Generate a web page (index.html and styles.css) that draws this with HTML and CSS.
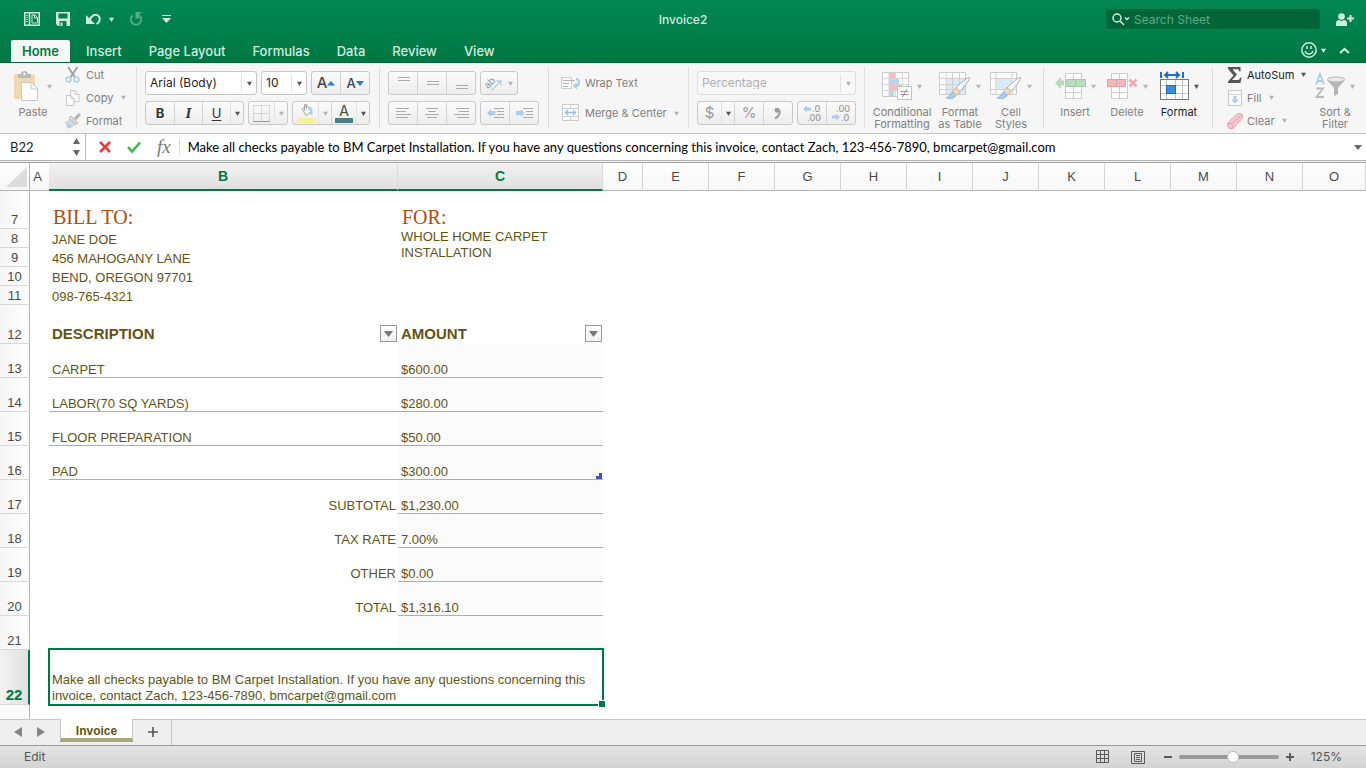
FILE: index.html
```html
<!DOCTYPE html>
<html lang="en">
<head>
<meta charset="utf-8">
<title>Invoice2</title>
<meta name="viewport" content="width=device-width, initial-scale=1">
<link rel="stylesheet" href="styles.css">
</head>
<body>
<svg class="defs" aria-hidden="true">
  <symbol id="caret" viewBox="0 0 6 6"><path d="M0 1h6L3 6z" fill="currentColor"/></symbol>
  <symbol id="brush" viewBox="0 0 26 24">
    <path d="M24.500 1.500c1 1-6 10.500-9.500 14l-4-3.500C14.500 8 23 .5 24.500 1.500z" fill="#fafafa" stroke="#a5a5a5"/>
    <path d="M15 15.500l-4-3.500c-2 .5-3 2-3 4l3 3c2 0 3.500-1.500 4-3.500z" fill="#f0d9b5" stroke="#d3bd9a"/>
    <path d="M8 16c-3 1-3 4.500-7 6 4 1.500 9 .5 10-3z" fill="#a9cdf0" stroke="#93bce4"/>
  </symbol>
</svg>

<header class="top">
  <div class="titlebar">
    <div class="quick">
      <button class="plain" aria-label="Workbook gallery"><svg width="16" height="14" viewBox="0 0 16 14"><rect x=".75" y=".75" width="14.500" height="12.500" fill="none" stroke="currentColor" stroke-width="1.500"/><path d="M5.500 1v12" stroke="currentColor" stroke-width="1.500"/><path d="M3 3v8" stroke="currentColor" stroke-width="1.500" stroke-dasharray="1 1"/><path d="M8 3h3l2.500 2.500v5.500H8z" fill="none" stroke="currentColor" stroke-width="1"/><path d="M10.500 3v3h3" fill="none" stroke="currentColor"/></svg></button>
      <button class="plain save" aria-label="Save"><svg width="14" height="14" viewBox="0 0 14 14"><path d="M0 0h14v14H2l-2-2z" fill="currentColor"/><path d="M2.500 1.500h9v5h-9zM3.500 9h7v5h-7z" fill="#00804a"/><path d="M5.500 10.500v3.500" stroke="currentColor" stroke-width="2"/></svg></button>
      <button class="plain undo" aria-label="Undo"><svg width="16" height="12" viewBox="0 0 16 12"><path d="M3 8C5.500 2.500 9 .5 12 2.500c3 2.500 2 6.500-1.500 8.500" fill="none" stroke="currentColor" stroke-width="2"/><path d="M0 2v9h9z" fill="currentColor"/></svg></button>
      <button class="plain undo-more" aria-label="Undo history"><svg class="caret"><use href="#caret"/></svg></button>
      <button class="plain redo" aria-label="Repeat" disabled><svg width="14" height="14" viewBox="0 0 14 14"><path d="M3.500 3.500a5.200 5.200 0 1 0 7.500.5" fill="none" stroke="currentColor" stroke-width="2"/><path d="M6.500 0H13l-2.500 2v4.500h-4z" fill="currentColor"/></svg></button>
      <button class="plain custom" aria-label="Customize toolbar"><svg width="9" height="8" viewBox="0 0 9 8"><path d="M0 .5h9" stroke="currentColor"/><path d="M0 3h9L4.500 8z" fill="currentColor"/></svg></button>
    </div>
    <h1 class="doc-title">Invoice2</h1>
    <div class="account">
      <label class="search">
        <svg width="18" height="13" viewBox="0 0 18 13"><circle cx="5" cy="5" r="4" fill="none" stroke="currentColor" stroke-width="1.500"/><path d="M8 8l4 4M13 4.500l2 2 2-2" fill="none" stroke="currentColor" stroke-width="1.500"/></svg>
        <input type="search" placeholder="Search Sheet" aria-label="Search Sheet">
      </label>
      <button class="plain" aria-label="Share"><svg width="18" height="13" viewBox="0 0 18 13"><circle cx="5.500" cy="3.500" r="3.300" fill="currentColor"/><path d="M0 13V10c0-2 1.500-3 3-3l2.500 1L8 7c1.500 0 3 1 3 3v3z" fill="currentColor"/><path d="M14.500 2v7M11 5.500h7" stroke="currentColor" stroke-width="2"/></svg></button>
    </div>
  </div>
  <nav class="tabs">
    <button class="tab active">Home</button>
    <button class="tab">Insert</button>
    <button class="tab">Page Layout</button>
    <button class="tab">Formulas</button>
    <button class="tab">Data</button>
    <button class="tab">Review</button>
    <button class="tab">View</button>
    <div class="tabs-end">
      <button class="plain smile" aria-label="Feedback"><svg width="16" height="16" viewBox="0 0 16 16"><circle cx="8" cy="8" r="7.200" fill="none" stroke="currentColor" stroke-width="1.500"/><path d="M6 4v3M10 4v3" stroke="currentColor" stroke-width="1.500"/><path d="M4 9c1 4 7 4 8 0" fill="none" stroke="currentColor" stroke-width="1.300"/></svg><svg class="caret"><use href="#caret"/></svg></button>
      <button class="plain" aria-label="Collapse ribbon"><svg width="11" height="7" viewBox="0 0 11 7"><path d="M1 6l4.500-4L10 6" fill="none" stroke="currentColor" stroke-width="2.200"/></svg></button>
    </div>
  </nav>
</header>

<section class="ribbon" aria-label="Home ribbon">
  <div class="group clipboard">
    <button class="big" disabled>
      <span class="pic"><svg width="24" height="30" viewBox="0 0 24 30"><rect x="0" y="3" width="21" height="25" rx="1.500" fill="#f1d8b3"/><path d="M4 3h3c0-4 7-4 7 0h3v4H4z" fill="#b9b9b9"/><circle cx="10.500" cy="3" r="1.200" fill="#f5f5f5"/><path d="M7.500 11.500h10l6 6v12h-16z" fill="#fdfdfd" stroke="#c9c9c9"/><path d="M17 11.500V18h6.500" fill="none" stroke="#c9c9c9"/></svg><svg class="caret"><use href="#caret"/></svg></span>
      <span class="cap">Paste</span>
    </button>
    <div class="stack">
      <button class="row-btn" disabled><svg width="16" height="16" viewBox="0 0 16 16"><path d="M3 0l7.500 11M12.500 0L5 11" stroke="#a2a2a2" stroke-width="2"/><circle cx="3.500" cy="12.500" r="2.500" fill="none" stroke="#a9cdee" stroke-width="1.400"/><circle cx="11.500" cy="12.500" r="2.500" fill="none" stroke="#a9cdee" stroke-width="1.400"/></svg>Cut</button>
      <button class="row-btn" disabled><svg width="16" height="16" viewBox="0 0 16 16"><path d="M5.500.5H10l4 4v7H5.500zM10 .5v4h4" fill="#fafafa" stroke="#c9c9c9"/><path d="M1.500 5.500H6l3 3v7H1.500zM6 5.500v3h3" fill="#fafafa" stroke="#c9c9c9"/></svg>Copy<svg class="caret"><use href="#caret"/></svg></button>
      <button class="row-btn" disabled><svg width="16" height="16" viewBox="0 0 16 16"><path d="M15 1l-5 5" stroke="#b3b3b3" stroke-width="3"/><path d="M6 3l7 7-2 2-7-7z" fill="#dcdcdc" stroke="#b9b9b9"/><path d="M4.500 6L10 11.500c-2 1-3 3.500-7 3.500L0 9c2 0 3-1 4.500-3z" fill="#d4d9df" stroke="#bbb" stroke-width=".5"/><path d="M2 11l6 2-5 2.500z" fill="#a9cdee"/></svg>Format</button>
    </div>
  </div>
  <i class="sep"></i>
  <div class="group rows font-group">
    <div class="line">
      <span class="combo font-name"><select aria-label="Font"><option>Arial (Body)</option></select><svg class="caret"><use href="#caret"/></svg></span>
      <span class="combo font-size"><select aria-label="Font size"><option>10</option></select><svg class="caret"><use href="#caret"/></svg></span>
      <div class="seg">
        <button aria-label="Increase font size"><span class="a-big">A</span><svg width="8" height="5" viewBox="0 0 8 5"><path d="M0 4.500L4 0l4 4.500z" fill="#1c7fd6"/></svg></button>
        <button aria-label="Decrease font size"><span class="a-small">A</span><svg width="8" height="5" viewBox="0 0 8 5"><path d="M0 0h8L4 5z" fill="#1c7fd6"/></svg></button>
      </div>
    </div>
    <div class="line">
      <div class="seg">
        <button class="b">B</button><button class="i">I</button><button class="u">U</button><button class="drop" aria-label="Underline style"><svg class="caret"><use href="#caret"/></svg></button>
      </div>
      <div class="seg">
        <button class="w25" disabled aria-label="Borders"><svg width="17" height="17" viewBox="0 0 17 17"><path d="M.5 .5h16M.5 8.500h16M.5 .5v16M8.500 .5v16M16.500 .5v16" stroke="#b9b9b9" stroke-dasharray="1 1"/><path d="M0 16.500h17" stroke="#999"/></svg></button><button class="drop" disabled aria-label="Border options"><svg class="caret"><use href="#caret"/></svg></button>
      </div>
      <div class="seg">
        <button class="w25" disabled aria-label="Fill color"><svg width="18" height="20" viewBox="0 0 18 20"><path d="M5 6l5-3.500 4.500 6L9 12.500z" fill="#f5f5f5" stroke="#a5a5a5"/><path d="M7.500 8V1.500h2V6" fill="none" stroke="#a5a5a5"/><path d="M11 4.500c3 0 4 2 3.500 7" fill="none" stroke="#a9cdee" stroke-width="2"/><rect y="15" width="18" height="5" fill="#f3f29b"/></svg></button><button class="drop" disabled aria-label="Fill color options"><svg class="caret"><use href="#caret"/></svg></button><button class="w25 fore" aria-label="Font color"><span>A</span></button><button class="drop" aria-label="Font color options"><svg class="caret"><use href="#caret"/></svg></button>
      </div>
    </div>
  </div>
  <i class="sep"></i>
  <div class="group rows align-group">
    <div class="line">
      <div class="seg">
        <button disabled aria-label="Align top"><svg width="15" height="14" viewBox="0 0 15 14"><path d="M2 1.500h12M2 4.500h12" stroke="#aaa"/></svg></button>
        <button disabled aria-label="Align middle"><svg width="15" height="14" viewBox="0 0 15 14"><path d="M2 5.500h12M2 8.500h12" stroke="#aaa"/></svg></button>
        <button disabled aria-label="Align bottom"><svg width="15" height="14" viewBox="0 0 15 14"><path d="M2 9.500h12M2 12.500h12" stroke="#aaa"/></svg></button>
      </div>
      <div class="seg">
        <button class="w36" disabled aria-label="Orientation"><svg width="18" height="18" viewBox="0 0 18 18"><text x="-1" y="12" transform="rotate(-45 5 9)" class="ab">ab</text><path d="M6.500 16.500l9-9M11.500 7h4.500v4.500" fill="none" stroke="#a9cdee" stroke-width="1.300"/></svg><svg class="caret"><use href="#caret"/></svg></button>
      </div>
    </div>
    <div class="line">
      <div class="seg">
        <button disabled aria-label="Align left"><svg width="15" height="13" viewBox="0 0 15 13"><path d="M0 1.500h13M0 4.500h10M0 7.500h15M0 10.500h12" stroke="#aaa"/></svg></button>
        <button disabled aria-label="Align center"><svg width="15" height="13" viewBox="0 0 15 13"><path d="M1 1.500h12M3 4.500h8M0 7.500h14M2 10.500h10" stroke="#aaa"/></svg></button>
        <button disabled aria-label="Align right"><svg width="15" height="13" viewBox="0 0 15 13"><path d="M2 1.500h13M5 4.500h10M0 7.500h15M3 10.500h12" stroke="#aaa"/></svg></button>
      </div>
      <div class="seg">
        <button disabled aria-label="Decrease indent"><svg width="17" height="12" viewBox="0 0 17 12"><path d="M7 1.500h10M10 4.500h7M10 7.500h7M7 10.500h10" stroke="#aaa"/><path d="M0 6l4-4v2h4.500v4H4v2z" fill="#a9cdee"/></svg></button>
        <button disabled aria-label="Increase indent"><svg width="17" height="12" viewBox="0 0 17 12"><path d="M7 1.500h10M10 4.500h7M10 7.500h7M7 10.500h10" stroke="#aaa"/><path d="M8.500 6l-4-4v2H0v4h4.500v2z" fill="#a9cdee"/></svg></button>
      </div>
    </div>
  </div>
  <i class="sep"></i>
  <div class="group rows wrap-group">
    <button class="row-btn" disabled><svg width="20" height="14" viewBox="0 0 20 14"><path d="M.5 1.500h10v11H.5z" fill="#fafafa" stroke="#ccc"/><path d="M2 4.500h12M2 7.500h6M2 10.500h5" stroke="#b5b5b5"/><path d="M15 3c4 0 4 7 0 7" fill="none" stroke="#a9cdee" stroke-width="2"/><path d="M16 6.500v7L11.500 10z" fill="#a9cdee"/></svg>Wrap Text</button>
    <button class="row-btn" disabled><svg width="20" height="18" viewBox="0 0 20 18"><path d="M1.500.5h16v16h-16zM1.500 4.500h16M1.500 12.500h16M9.500.5v4M9.500 12.500v4" fill="#fafafa" stroke="#ccc"/><path d="M4.500 8.500h10M7 6L4.500 8.500 7 11M12 6l2.500 2.500L12 11" fill="none" stroke="#93c1ea" stroke-width="1.300"/></svg>Merge &amp; Center<svg class="caret"><use href="#caret"/></svg></button>
  </div>
  <i class="sep"></i>
  <div class="group rows number-group">
    <div class="line">
      <span class="combo number-format"><select aria-label="Number format" disabled><option>Percentage</option></select><svg class="caret"><use href="#caret"/></svg></span>
    </div>
    <div class="line">
      <div class="seg sym">
        <button class="w23" disabled>$</button><button class="drop dark" aria-label="Currency options"><svg class="caret"><use href="#caret"/></svg></button><button disabled>%</button><button disabled aria-label="Comma style"><svg width="8" height="12" viewBox="0 0 8 12"><path d="M1 11.500c4-1.500 5-5.500 4.500-7.500C5 2 2 .5 1.500 3.500" fill="none" stroke="#999" stroke-width="2"/><circle cx="3" cy="3.500" r="2.300" fill="#999"/></svg></button>
      </div>
      <div class="seg dec">
        <button disabled aria-label="Increase decimal"><svg width="18" height="18" viewBox="0 0 18 18"><path d="M0 5l4-3.500v2h4v3H4v2z" fill="#a9cdee"/><text x="9" y="8">.0</text><text x="4" y="17">.00</text></svg></button>
        <button disabled aria-label="Decrease decimal"><svg width="18" height="18" viewBox="0 0 18 18"><path d="M8 13L4 9.500v2H0v3h4v2z" fill="#a9cdee"/><text x="4" y="8">.00</text><text x="9" y="17">.0</text></svg></button>
      </div>
    </div>
  </div>
  <i class="sep"></i>
  <div class="group styles-group">
    <button class="big w60" disabled><span class="pic"><svg width="30" height="28" viewBox="0 0 30 28"><path d="M.5.500h26v24H.5z" fill="#fdfdfd" stroke="#ccc"/><path d="M7 1h6v5H7zM7 12h13v6H7z" fill="#f6bcbc"/><path d="M7 6h10v6H7zM7 18h5v6H7z" fill="#b5d5f2"/><path d="M7 1v23M13.500 1v23M20.500 1v23M1 6.500h25M1 12.500h25M1 18.500h25" stroke="#d5d5d5" fill="none"/><rect x="15.500" y="14.500" width="14" height="13" fill="#fdfdfd" stroke="#c5c5c5"/><path d="M18.500 19.500h8M18.500 22.500h8M25 17l-4.500 8" stroke="#999" fill="none"/></svg><svg class="caret"><use href="#caret"/></svg></span><span class="cap">Conditional Formatting</span></button>
    <button class="big w56" disabled><span class="pic"><svg width="32" height="28" viewBox="0 0 32 28"><path d="M.5.500h26v22H.5z" fill="#fdfdfd" stroke="#ccc"/><path d="M7 6h19v16H7z" fill="#dce9f6"/><path d="M7 1v22M13.500 1v22M20.500 1v22M1 6.500h25M1 12.500h25M1 17.500h25" stroke="#d0d0d0" fill="none"/><use href="#brush" x="6" y="4" width="26" height="24"/></svg><svg class="caret"><use href="#caret"/></svg></span><span class="cap">Format<br>as Table</span></button>
    <button class="big w46" disabled><span class="pic"><svg width="32" height="28" viewBox="0 0 32 28"><path d="M.5.500h26v22H.5z" fill="#fdfdfd" stroke="#ccc"/><path d="M6 6h16v11H6z" fill="#dce9f6"/><path d="M6 1v22M22 1v22M1 6.500h25M1 17.500h25" stroke="#d0d0d0" fill="none"/><use href="#brush" x="6" y="4" width="26" height="24"/></svg><svg class="caret"><use href="#caret"/></svg></span><span class="cap">Cell<br>Styles</span></button>
  </div>
  <i class="sep"></i>
  <div class="group cells-group">
    <button class="big w52" disabled><span class="pic"><svg width="31" height="26" viewBox="0 0 31 26"><path d="M10.500.500h16v25h-16zM10.500 6.500h16M10.500 19.500h16M18.500.500v25" fill="#fdfdfd" stroke="#ccc"/><path d="M0 10l6-6v3.500h3v5H6V16z" fill="#b5d9b9"/><path d="M11 6.500h19.500v7H11zM20.500 6.500v7" fill="#b9dcbd" stroke="#a5cba9"/></svg><svg class="caret"><use href="#caret"/></svg></span><span class="cap">Insert</span></button>
    <button class="big w52" disabled><span class="pic"><svg width="31" height="26" viewBox="0 0 31 26"><path d="M4.500.500h16v25h-16zM4.500 6.500h16M4.500 19.500h16M12.500.500v25" fill="#fdfdfd" stroke="#ccc"/><path d="M.5 6.500h18v7H.5zM9.500 6.500v7" fill="#f2b7b9" stroke="#dfa2a5"/><path d="M22.500 6.500l7 7M29.500 6.500l-7 7" stroke="#eba9ab" stroke-width="2.500"/></svg><svg class="caret"><use href="#caret"/></svg></span><span class="cap">Delete</span></button>
    <button class="big w52"><span class="pic"><svg width="29" height="28" viewBox="0 0 29 28"><path d="M1 0v6M23 0v6" stroke="#1b6fc2" stroke-width="2"/><path d="M5 3h14M8 0L5 3l3 3M16 0l3 3-3 3" fill="none" stroke="#1b6fc2" stroke-width="1.800"/><rect x=".5" y="7.500" width="28" height="20" fill="#fff" stroke="#777"/><path d="M6.500 8v19M15.500 8v19M22.500 8v19M1 13.500h27M1 21.500h27" stroke="#c5c5c5"/><rect x="6.500" y="13.500" width="9" height="8" fill="#3b8ede" stroke="#1b6fc2"/></svg><svg class="caret"><use href="#caret"/></svg></span><span class="cap">Format</span></button>
  </div>
  <i class="sep"></i>
  <div class="group edit-group">
    <div class="stack">
      <button class="row-btn"><svg width="16" height="16" viewBox="0 0 16 16"><path d="M1 0h12.500v4.500h-1.200C12 2.800 11.500 2.300 10 2.300H5.500L10 7.700 5 13h5.500c1.800 0 2.300-.8 2.800-2.500h1.200L13.500 16H1v-1.500L6.500 8.500 1 1.700z" fill="#555"/></svg>AutoSum<svg class="caret"><use href="#caret"/></svg></button>
      <button class="row-btn" disabled><svg width="16" height="16" viewBox="0 0 16 16"><rect x="1.500" y=".5" width="13" height="15" fill="#fafafa" stroke="#c9c9c9"/><path d="M2 4.500h12" stroke="#d5d5d5"/><path d="M6.500 6h3v3.500H12L8 13.500 4 9.500h2.500z" fill="#a9cdee"/></svg>Fill<svg class="caret"><use href="#caret"/></svg></button>
      <button class="row-btn" disabled><svg width="16" height="16" viewBox="0 0 16 16"><path d="M10.500.5h3.500l1.500 1.500v3L6 15.500H2L.5 12.500V10z" fill="#f6c5d0" stroke="#e0a6b4"/><path d="M.8 10.500H5L6 15M5 10.500L15 1.500" fill="none" stroke="#e0a6b4"/></svg>Clear<svg class="caret"><use href="#caret"/></svg></button>
    </div>
    <button class="big w60" disabled><span class="pic"><svg width="30" height="26" viewBox="0 0 30 26"><path d="M1 11.500L5 1l4 10.500M2.500 8h5" fill="none" stroke="#a9cdee" stroke-width="1.800"/><path d="M1.500 15.500H8L1.500 24H9" fill="none" stroke="#b9b9b9" stroke-width="1.800"/><path d="M12 7l7 8v8l4-2v-6l7-8z" fill="#b5b5b5"/><ellipse cx="21" cy="6.500" rx="8.500" ry="2.500" fill="#ececec" stroke="#b5b5b5"/></svg><svg class="caret"><use href="#caret"/></svg></span><span class="cap">Sort &amp;<br>Filter</span></button>
  </div>
</section>

<section class="formula" aria-label="Formula bar">
  <div class="name-box">
    <input type="text" value="B22" aria-label="Name box">
    <svg width="7" height="18" viewBox="0 0 7 18"><path d="M0 6h7L3.500 0zM0 12h7l-3.500 6z" fill="#666"/></svg>
  </div>
  <button class="plain" aria-label="Cancel"><svg width="12" height="12" viewBox="0 0 12 12"><path d="M1 1l10 10M11 1L1 11" stroke="#f0373c" stroke-width="2.500"/></svg></button>
  <button class="plain" aria-label="Enter"><svg width="14" height="12" viewBox="0 0 14 12"><path d="M1 6l4 4.500L13 1.500" fill="none" stroke="#3db954" stroke-width="2.600"/></svg></button>
  <span class="fx">fx</span>
  <input class="entry" type="text" aria-label="Formula" value="Make all checks payable to BM Carpet Installation. If you have any questions concerning this invoice, contact Zach, 123-456-7890, bmcarpet@gmail.com">
  <button class="plain expand" aria-label="Expand formula bar"><svg width="8" height="5" viewBox="0 0 8 5"><path d="M0 0h8L4 5z" fill="#666"/></svg></button>
</section>

<main class="grid">
  <table class="sheet">
    <colgroup><col class="c-head"><col class="c-a"><col class="c-b"><col class="c-c"><col class="c-d"><col class="c-n"><col class="c-n"><col class="c-n"><col class="c-n"><col class="c-n"><col class="c-n"><col class="c-n"><col class="c-n"><col class="c-n"><col class="c-n"><col></colgroup>
    <thead>
      <tr><th class="corner"><svg width="21" height="20" viewBox="0 0 21 20"><path d="M21 0v20H0z" fill="#dcdcdc"/></svg></th><th class="narrow">A</th><th class="on">B</th><th class="on">C</th><th>D</th><th>E</th><th>F</th><th>G</th><th>H</th><th>I</th><th>J</th><th>K</th><th>L</th><th>M</th><th>N</th><th>O</th></tr>
    </thead>
    <tbody>
      <tr class="r-7"><th>7</th><td></td><td class="heading">BILL TO:</td><td class="heading">FOR:</td><td colspan="12"></td></tr>
      <tr class="r-s"><th>8</th><td></td><td>JANE DOE</td><td class="job" rowspan="4">WHOLE HOME CARPET<br>INSTALLATION</td><td colspan="12"></td></tr>
      <tr class="r-s"><th>9</th><td></td><td>456 MAHOGANY LANE</td><td colspan="12"></td></tr>
      <tr class="r-s"><th>10</th><td></td><td>BEND, OREGON 97701</td><td colspan="12"></td></tr>
      <tr class="r-s"><th>11</th><td></td><td>098-765-4321</td><td colspan="12"></td></tr>
      <tr class="r-12"><th>12</th><td></td><td class="field"><div>DESCRIPTION<button aria-label="Filter description"><svg width="9" height="6" viewBox="0 0 9 6"><path d="M0 0h9L4.500 6z" fill="#777"/></svg></button></div></td><td class="field"><div>AMOUNT<button aria-label="Filter amount"><svg width="9" height="6" viewBox="0 0 9 6"><path d="M0 0h9L4.500 6z" fill="#777"/></svg></button></div></td><td colspan="12"></td></tr>
      <tr class="r-m"><th>13</th><td></td><td class="ruled">CARPET</td><td class="ruled amt">$600.00</td><td colspan="12"></td></tr>
      <tr class="r-m"><th>14</th><td></td><td class="ruled">LABOR(70 SQ YARDS)</td><td class="ruled amt">$280.00</td><td colspan="12"></td></tr>
      <tr class="r-m"><th>15</th><td></td><td class="ruled">FLOOR PREPARATION</td><td class="ruled amt">$50.00</td><td colspan="12"></td></tr>
      <tr class="r-m"><th>16</th><td></td><td class="ruled">PAD</td><td class="ruled amt last">$300.00</td><td colspan="12"></td></tr>
      <tr class="r-m"><th>17</th><td></td><td class="sum">SUBTOTAL</td><td class="ruled amt">$1,230.00</td><td colspan="12"></td></tr>
      <tr class="r-m"><th>18</th><td></td><td class="sum">TAX RATE</td><td class="ruled amt">7.00%</td><td colspan="12"></td></tr>
      <tr class="r-m"><th>19</th><td></td><td class="sum">OTHER</td><td class="ruled amt">$0.00</td><td colspan="12"></td></tr>
      <tr class="r-m"><th>20</th><td></td><td class="sum">TOTAL</td><td class="ruled amt">$1,316.10</td><td colspan="12"></td></tr>
      <tr class="r-m"><th>21</th><td></td><td></td><td class="amt"></td><td colspan="12"></td></tr>
      <tr class="r-22"><th class="on">22</th><td></td><td class="selected" colspan="2">Make all checks payable to BM Carpet Installation. If you have any questions concerning this invoice, contact Zach, 123-456-7890, bmcarpet@gmail.com</td><td colspan="12"></td></tr>
    </tbody>
  </table>
</main>

<nav class="sheets" aria-label="Sheets">
  <button class="plain" aria-label="Previous sheet"><svg width="8" height="10" viewBox="0 0 8 10"><path d="M8 0v10L0 5z" fill="#858585"/></svg></button>
  <button class="plain" aria-label="Next sheet"><svg width="8" height="10" viewBox="0 0 8 10"><path d="M0 0v10l8-5z" fill="#858585"/></svg></button>
  <button class="sheet-tab">Invoice</button>
  <button class="plain add" aria-label="Add sheet"><svg width="10" height="10" viewBox="0 0 10 10"><path d="M5 0v10M0 5h10" stroke="#555" stroke-width="1.600"/></svg></button>
</nav>

<footer class="status">
  <span class="mode">Edit</span>
  <button class="plain" aria-label="Normal view"><svg width="14" height="14" viewBox="0 0 14 14"><path d="M.5.500h12v12H.5zM4.500.500v12M8.500.500v12M.5 4.500h12M.5 8.500h12" fill="none" stroke="#5a5a5a"/></svg></button>
  <button class="plain page-view" aria-label="Page layout view"><svg width="14" height="13" viewBox="0 0 14 13"><path d="M.5.500h13v12H.5zM3.500 2.500h7v8h-7zM5 4.500h4M5 6.500h4M5 8.500h4" fill="none" stroke="#5a5a5a"/></svg></button>
  <button class="plain minus" aria-label="Zoom out"><svg width="8" height="8" viewBox="0 0 8 8"><path d="M0 4h8" stroke="#5a5a5a" stroke-width="2"/></svg></button>
  <input class="zoom" type="range" min="0" max="100" value="55" aria-label="Zoom">
  <button class="plain" aria-label="Zoom in"><svg width="8" height="8" viewBox="0 0 8 8"><path d="M0 4h8M4 0v8" stroke="#5a5a5a" stroke-width="2"/></svg></button>
  <output class="percent">125%</output>
</footer>
</body>
</html>
```

FILE: styles.css
```css
* { box-sizing: border-box; }

html, body { height: 100%; margin: 0; }

body {
  display: flex;
  flex-direction: column;
  overflow: hidden;
  background: #fff;
  color: #1e1e1e;
  font: 11px/12px Inter, "Liberation Sans", sans-serif;
}

button, input, select { font: inherit; color: inherit; margin: 0; }
button { border: 0; padding: 0; background: none; }
svg { flex: none; display: block; overflow: visible; }
.defs { position: absolute; width: 0; height: 0; }
.plain { display: flex; align-items: center; }
.caret { width: 5px; height: 5px; color: #555; }
:disabled .caret, :disabled + .caret { color: #b5b5b5; }

/* Title bar and tabs */
.top {
  flex: none;
  color: #d3ebdf;
  background: linear-gradient(#008754, #007843);
  border-bottom: 1px solid #00693a;
}
.top .caret { color: inherit; }
.titlebar {
  display: grid;
  grid-template-columns: 1fr auto 1fr;
  align-items: center;
  height: 38px;
  padding: 0 12px 0 24px;
}
.quick { display: flex; align-items: center; }
.save { margin-left: 16px; }
.undo { margin-left: 16px; }
.undo-more { margin-left: 7px; }
.redo { margin-left: 15px; opacity: .4; }
.custom { margin-left: 19px; }
.doc-title {
  margin: 0;
  padding: 2px 12px 0 0;
  font-size: 12px;
  line-height: 16px;
  font-weight: 500;
}
.account { display: flex; justify-content: flex-end; align-items: center; gap: 16px; }
.search {
  display: flex;
  align-items: center;
  gap: 4px;
  width: 214px;
  height: 20px;
  padding: 0 6px;
  border-radius: 3px;
  background: #00663a;
}
.search input {
  flex: 1;
  min-width: 0;
  border: 0;
  padding: 0;
  background: none;
  outline: 0;
  font-size: 12px;
}
.search input::placeholder { color: #5fa785; opacity: 1; }
.tabs {
  display: flex;
  align-items: flex-end;
  gap: 5px;
  height: 24px;
  padding: 0 16px 0 11px;
}
.tab {
  height: 22px;
  padding: 0 11px;
  border-radius: 2px 2px 0 0;
  font-size: 13px;
  line-height: 20px;
  font-weight: 500;
}
.tab.active { background: #f6f6f6; color: #007a45; font-weight: 600; }
.tabs-end { display: flex; align-items: center; gap: 13px; height: 24px; margin-left: auto; }
.smile { gap: 4px; }

/* Ribbon */
.ribbon {
  flex: none;
  display: flex;
  height: 71px;
  background: #f6f6f6;
  border-bottom: 1px solid #c4c4c4;
}
.group { flex: none; display: flex; }
.sep { flex: none; width: 1px; margin: 4px 0 5px; background: #dedede; }
.ribbon :disabled { color: #808080; }
.stack { display: flex; flex-direction: column; }
.row-btn { display: flex; align-items: center; gap: 4px; height: 23px; white-space: nowrap; }
.row-btn .caret { margin-left: 3px; }
.big {
  display: flex;
  flex-direction: column;
  align-items: center;
  padding-top: 7px;
}
.pic { display: flex; align-items: center; justify-content: center; gap: 5px; height: 32px; margin-bottom: 4px; }
.cap { text-align: center; }
.w60 { width: 60px; }
.w56 { width: 56px; }
.w52 { width: 52px; }
.w46 { width: 46px; }
.clipboard { width: 136px; padding-left: 14px; gap: 13px; }
.clipboard .pic { gap: 9px; }
.clipboard .stack .row-btn { gap: 5px; }
.rows { flex-direction: column; gap: 6px; padding: 8px 8px 0; }
.line { display: flex; gap: 4px; height: 24px; }
.combo {
  display: flex;
  align-items: center;
  position: relative;
  border: 1px solid #c6c6c6;
  border-radius: 3px;
  background: #fff;
}
.combo select {
  appearance: none;
  width: 100%;
  height: 22px;
  padding: 0 16px 0 4px;
  border: 0;
  background: none;
  font-size: 12px;
  opacity: 1;
}
.combo .caret { position: absolute; right: 4px; pointer-events: none; }
.combo::after {
  content: "";
  position: absolute;
  right: 14px;
  top: 2px;
  bottom: 2px;
  border-left: 1px solid #e2e2e2;
}
.font-name { width: 112px; }
.font-size { width: 46px; }
.number-format { width: 159px; border-color: #dedede; background: #f8f8f8; }
.ribbon .number-format select { color: #b0b0b0; }
.seg {
  display: flex;
  border: 1px solid #c9c9c9;
  border-radius: 3px;
  background: linear-gradient(#fbfbfb, #ededed);
}
.seg button {
  display: flex;
  align-items: center;
  justify-content: center;
  width: 29px;
  border-left: 1px solid #d3d3d3;
}
.seg button:first-child { width: 28px; border-left: 0; }
.seg .drop { width: 13px; border-color: #e2e2e2; }
.seg button.w23 { width: 23px; }
.seg button.w25 { width: 25px; }
.seg button.w36 { width: 36px; gap: 5px; }
.a-big { font-size: 15px; font-weight: 500; color: #444; }
.a-small { font-size: 13px; font-weight: 500; color: #444; }
.seg .b, .seg .i, .seg .u { width: 28px; font-size: 13px; color: #333; }
.seg .b { font-weight: 700; }
.seg .i { font-family: "Liberation Serif", serif; font-size: 15px; font-style: italic; font-weight: 700; }
.seg .u { text-decoration: underline; text-underline-offset: 2px; }
.fore span { width: 18px; border-bottom: 5px solid #4a8083; font-size: 14px; line-height: 15px; color: #444; }
.ab { font: 10px Inter, sans-serif; fill: #999; }
.font-group { width: 242px; }
.align-group { width: 168px; padding-left: 8px; }
.wrap-group { width: 139px; padding-left: 12px; }
.wrap-group .row-btn { height: 24px; }
.number-group { width: 175px; }
.sym button { font-size: 15px; }
.ribbon .sym :disabled { color: #999; }
.dec text { font: 500 9px Inter, sans-serif; fill: #999; }
.styles-group { padding: 0 9px 0 7px; }
.cells-group { padding: 0 7px 0 5px; }
.edit-group { flex: 1; padding-left: 14px; }
.edit-group .stack { width: 78px; }

/* Formula bar */
.formula {
  flex: none;
  display: flex;
  align-items: center;
  height: 29px;
  padding: 0 4px 2px 0;
  border-bottom: 1px solid #a8a8a8;
  box-shadow: inset 0 -1px #f0f0f0, inset 0 -2px #b4b4b4;
  font-family: Lato, "Liberation Sans", sans-serif;
  font-size: 13px;
  gap: 16px;
}
.name-box {
  display: flex;
  align-items: center;
  width: 86px;
  height: 26px;
  padding: 0 5px 0 10px;
  border-right: 1px solid #bdbdbd;
  margin-right: -3px;
}
.name-box input { flex: 1; min-width: 0; border: 0; padding: 0; background: none; }
.fx {
  padding-right: 8px;
  border-right: 1px solid #d8d8d8;
  font: italic 19px/16px "Liberation Serif", serif;
  color: #777;
}
.entry { flex: 1; min-width: 0; margin-left: -8px; border: 0; padding: 0; color: #000; background: none; outline: 0; }

/* Worksheet */
.grid {
  flex: 1;
  min-height: 0;
  overflow: hidden;
  background: linear-gradient(to right, #fafafa 29px, #b4b4b4 29px, #b4b4b4 30px, #fff 30px);
}
.sheet {
  width: 100%;
  table-layout: fixed;
  border-collapse: separate;
  border-spacing: 0;
  font: 13px/16px "Liberation Sans", Arial, sans-serif;
  color: #5f5413;
}
.c-head { width: 30px; }
.c-a { width: 19px; }
.c-b { width: 349px; }
.c-c { width: 205px; }
.c-d { width: 40px; }
.c-n { width: 66px; }
.sheet td { padding: 0 3px; vertical-align: bottom; }
.sheet th { padding: 0; font-weight: 400; color: #4a4a4a; }
.sheet thead th {
  height: 28px;
  border-right: 1px solid #d4d4d4;
  border-bottom: 1px solid #b4b4b4;
  background: linear-gradient(#fff, #f6f6f6);
}
.sheet thead .on {
  border-right-color: #dcdcdc;
  border-bottom: 2px solid #007a43;
  background: linear-gradient(#f2f2f2, #e0e0e0);
  font-size: 14px;
}
.sheet .on { color: #007a43; font-weight: 700; }
.sheet thead .narrow { border-right: 0; padding-right: 4px; }
.sheet thead .corner { border-right-color: #b4b4b4; }
.corner svg { margin-left: 6px; }
tbody th {
  vertical-align: bottom;
  border-right: 1px solid #b4b4b4;
  border-bottom: 1px solid #d8d8d8;
  background: linear-gradient(to right, #f5f5f5, #fff);
}
.sheet tbody .on {
  padding-bottom: 1px;
  border-right: 2px solid #007a43;
  background: linear-gradient(to right, #f2f2f2, #e0e0e0);
  font-size: 15px;
}
.r-7 { height: 38px; }
.r-s { height: 19px; }
.r-12 { height: 39px; }
.r-m { height: 34px; }
.r-22 { height: 55px; }
.sheet .heading { padding-left: 4px; font: 20px/24px "Liberation Serif", serif; color: #b14d0c; }
.sheet .job { vertical-align: top; }
.sheet .field { padding-bottom: 2px; }
.field div { display: flex; justify-content: space-between; align-items: center; font-size: 15px; font-weight: 700; }
.field button {
  display: flex;
  align-items: center;
  justify-content: center;
  width: 17px;
  height: 17px;
  margin-right: -2px;
  border: 1px solid #999;
  background: linear-gradient(#fff, #f0f0f0);
}
.sheet .ruled { box-shadow: inset 0 -1px #c4b84a; }
.sheet .sum { padding-right: 2px; text-align: right; }
.sheet .amt { background: #fbfbfb; }
.last { position: relative; }
.last::after {
  content: "";
  position: absolute;
  right: 1px;
  bottom: 1px;
  width: 6px;
  height: 6px;
  background: linear-gradient(#4453b4, #4453b4) right / 3px 6px no-repeat, linear-gradient(#4453b4, #4453b4) bottom / 6px 3px no-repeat;
}
.sheet .selected { position: relative; padding-bottom: 1px; }
.selected::before {
  content: "";
  position: absolute;
  inset: -2px -1px -1px;
  border: 2px solid #007a43;
}
.selected::after {
  content: "";
  position: absolute;
  right: -2px;
  bottom: -2px;
  width: 6px;
  height: 6px;
  border: 1px solid #fff;
  border-width: 1px 0 0 1px;
  background: #007a43;
}

/* Sheet tabs */
.sheets {
  flex: none;
  display: flex;
  align-items: center;
  height: 26px;
  padding-left: 14px;
  background: #efefef;
  box-shadow: inset 0 1px #c6c6c6;
}
.sheets .plain + .plain { margin-left: 15px; }
.sheet-tab {
  align-self: flex-start;
  width: 73px;
  height: 23px;
  margin-left: 15px;
  padding-top: 5px;
  border: 1px solid #c6c6c6;
  border-width: 0 1px;
  border-bottom: 4px solid #aaa77b;
  background: #fff;
  color: #5f5413;
  font: bold 12px/14px "Liberation Sans", Arial, sans-serif;
}
.add { align-self: stretch; padding: 0 13px 0 15px; border-right: 1px solid #c6c6c6; }

/* Status bar */
.status {
  flex: none;
  display: flex;
  align-items: center;
  height: 23px;
  padding: 0 24px;
  border-top: 1px solid #999;
  background: linear-gradient(#e4e4e4, #d3d3d3);
  color: #555;
  font-size: 12px;
}
.mode { margin-right: auto; }
.page-view { margin-left: 21px; }
.minus { margin-left: 19px; }
.zoom { appearance: none; width: 100px; height: 12px; margin: 0 7px; background: none; }
.zoom::-webkit-slider-runnable-track { height: 4px; border-radius: 2px; background: #999; }
.zoom::-webkit-slider-thumb {
  appearance: none;
  width: 12px;
  height: 12px;
  margin-top: -4px;
  border: 1px solid #bbb;
  border-radius: 50%;
  background: #fff;
}
.percent { margin-left: 17px; }
```
